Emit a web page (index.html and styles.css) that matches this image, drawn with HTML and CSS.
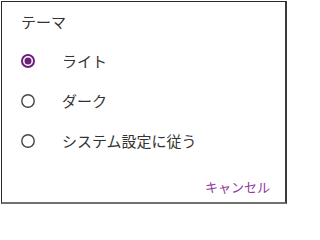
FILE: index.html
```html
<!DOCTYPE html>
<html lang="ja">
<head>
<meta charset="utf-8">
<link rel="stylesheet" href="styles.css">
</head>
<body>
<div class="dialog">
  <div class="title">テーマ</div>
  <div class="options">
    <div class="option">
      <svg class="radio" width="14" height="14" viewBox="0 0 14 14"><circle cx="7" cy="7" r="6" fill="none" stroke="#6d1f7c" stroke-width="2"/><circle cx="7" cy="7" r="3.5" fill="#6d1f7c"/></svg>
      <span class="label">ライト</span>
    </div>
    <div class="option">
      <svg class="radio" width="14" height="14" viewBox="0 0 14 14"><circle cx="7" cy="7" r="6.2" fill="none" stroke="#444" stroke-width="1.4"/></svg>
      <span class="label">ダーク</span>
    </div>
    <div class="option">
      <svg class="radio" width="14" height="14" viewBox="0 0 14 14"><circle cx="7" cy="7" r="6.2" fill="none" stroke="#444" stroke-width="1.4"/></svg>
      <span class="label">システム設定に従う</span>
    </div>
  </div>
  <div class="footer"><span class="cancel">キャンセル</span></div>
</div>
</body>
</html>
```
FILE: styles.css
```css
html, body {
  margin: 0;
  padding: 0;
  background: #fff;
}
body {
  width: 288px;
  height: 204px;
  overflow: hidden;
  font-family: "Noto Sans CJK JP", "Noto Sans", sans-serif;
  color: #333;
}
.dialog {
  box-sizing: border-box;
  margin: 1px 0 0 1px;
  width: 286px;
  height: 203px;
  border-left: 1px solid #2a2a2a;
  border-top: 1px solid #2a2a2a;
  border-right: 2px solid #3a3a3a;
  border-bottom: 2px solid #707070;
  display: flex;
  flex-direction: column;
  padding: 10px 15px 0 19px;
}
.title {
  font-size: 15px;
  line-height: 20px;
}
.options {
  display: flex;
  flex-direction: column;
  margin-top: 9px;
}
.option {
  height: 40px;
  display: flex;
  align-items: center;
  gap: 27px;
}
.radio {
  display: block;
  flex: none;
}
.label {
  font-size: 15px;
  line-height: 20px;
}
.footer {
  display: flex;
  justify-content: flex-end;
  margin-top: 17px;
}
.cancel {
  font-size: 13px;
  line-height: 17px;
  color: #8f3a9c;
}
```
